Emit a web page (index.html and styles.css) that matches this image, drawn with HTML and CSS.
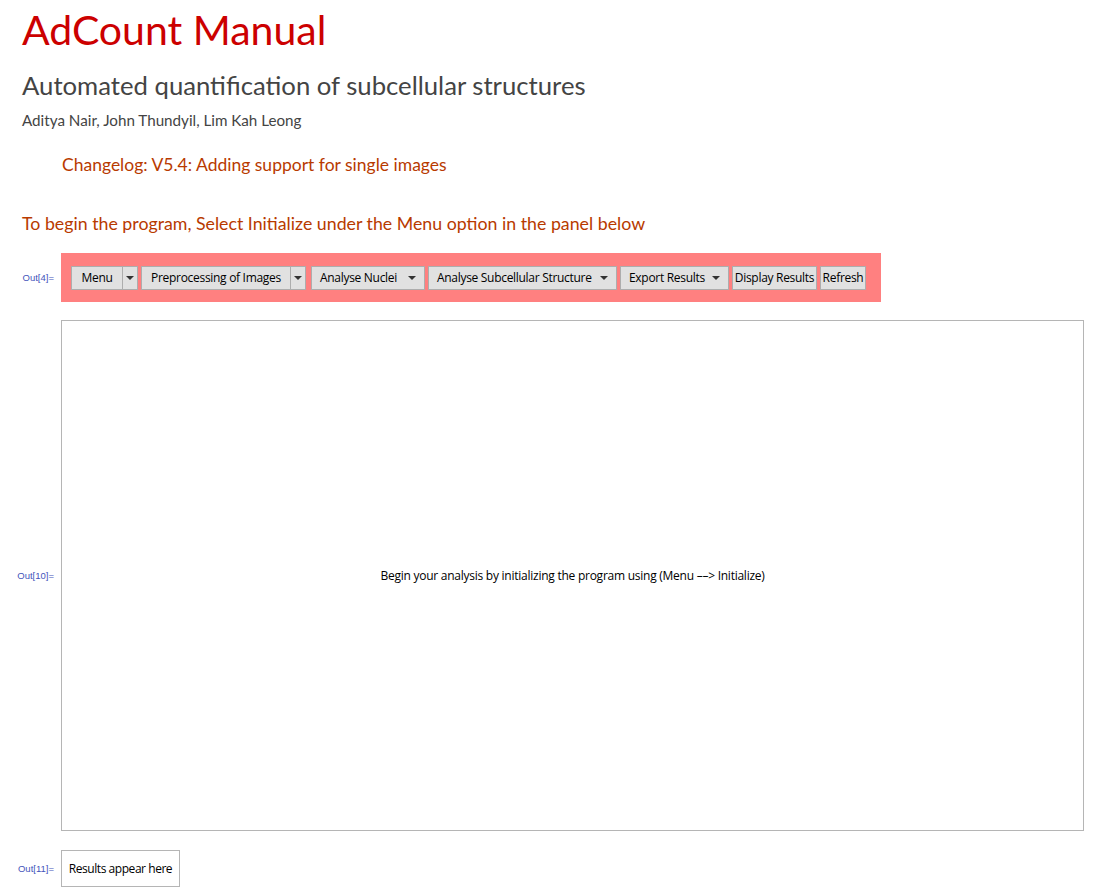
FILE: index.html
```html
<!DOCTYPE html>
<html>
<head>
<meta charset="utf-8">
<link rel="stylesheet" href="styles.css">
</head>
<body>
<div class="page">
  <header class="head">
    <h1 class="title">AdCount Manual</h1>
    <h2 class="subtitle">Automated quantification of subcellular structures</h2>
    <p class="authors">Aditya Nair, John Thundyil, Lim Kah Leong</p>
    <p class="changelog">Changelog: V5.4: Adding support for single images</p>
    <p class="instr">To begin the program, Select Initialize under the Menu option in the panel below</p>
  </header>

  <div class="cell cell-bar">
    <span class="out">Out[4]=</span>
    <div class="panel">
      <div class="split"><span class="btn b-menu">Menu</span><span class="arrowbtn"><i class="tri"></i></span></div>
      <div class="split"><span class="btn b-pre">Preprocessing of Images</span><span class="arrowbtn"><i class="tri"></i></span></div>
      <span class="btn dd b-nuc">Analyse Nuclei<i class="tri"></i></span>
      <span class="btn dd b-sub">Analyse Subcellular Structure<i class="tri"></i></span>
      <span class="btn dd b-exp">Export Results<i class="tri"></i></span>
      <span class="btn b-disp">Display Results</span>
      <span class="btn b-ref">Refresh</span>
    </div>
  </div>

  <div class="cell cell-main">
    <span class="out">Out[10]=</span>
    <div class="mainbox">Begin your analysis by initializing the program using (Menu &ndash;&ndash;&gt; Initialize)</div>
  </div>

  <div class="cell cell-res">
    <span class="out">Out[11]=</span>
    <div class="resbox">Results appear here</div>
  </div>
</div>
</body>
</html>
```

FILE: styles.css
```css
* { box-sizing: border-box; }
html, body { margin: 0; padding: 0; background: #fff; }
body { font-family: "Open Sans", "Noto Sans", sans-serif; }

.page { width: 1111px; }

.head { padding-left: 22px; font-family: Lato, "Liberation Sans", sans-serif; }
.title {
  margin: 0; padding-top: 4px;
  font-size: 41px; font-weight: 400; color: #cc0000; line-height: 52px;
}
.subtitle {
  margin: 13px 0 0 0; font-size: 25.7px; font-weight: 400; color: #444;
  line-height: 32px;
}
.authors { margin: 9px 0 0 0; font-size: 15.2px; color: #444; line-height: 20px; }
.changelog {
  margin: 24px 0 0 40px; font-size: 17.5px; color: #b83a00; line-height: 22px;
}
.instr { margin: 36px 0 0 0; font-size: 17.75px; color: #b83a00; line-height: 22px; }

.cell { display: flex; align-items: center; }
.out {
  width: 61px; padding-right: 7px; text-align: right;
  font-family: "Liberation Sans", Arial, sans-serif; font-size: 9.5px; color: #4455bb;
  flex: none;
}
.cell-bar { margin-top: 19px; }
.panel {
  background: #ff8080; height: 49px; width: 820px;
  display: flex; align-items: center; gap: 3px; padding: 0 10px;
}
.btn {
  display: inline-flex; align-items: center; justify-content: center;
  height: 24px; background: #e1e1e1; border: 1px solid #adadad;
  font-size: 12px; color: #000; white-space: nowrap; padding: 0 8px;
  font-family: "Open Sans", "Noto Sans", sans-serif; letter-spacing: -0.3px;
}
.split { display: flex; }
.split .btn { border-right: none; }
.arrowbtn {
  width: 16px; height: 24px; background: #e1e1e1; border: 1px solid #adadad;
  display: inline-flex; align-items: center; justify-content: center;
}
.tri {
  display: inline-block; width: 0; height: 0;
  border-left: 4px solid transparent; border-right: 4px solid transparent;
  border-top: 4px solid #333;
}
.dd { justify-content: space-between; }
.b-menu { width: 51px; }
.b-pre { width: 149px; }
.b-nuc { width: 114px; margin-left: 2px; }
.b-sub { width: 189px; }
.b-exp { width: 109px; }
.b-disp { width: 85px; padding: 0 3px; }
.b-ref { width: 46px; padding: 0 3px; }

.cell-main { margin-top: 18px; }
.mainbox {
  width: 1023px; height: 511px; border: 1px solid #b5b5b5;
  display: flex; align-items: center; justify-content: center;
  font-size: 12px; color: #000; letter-spacing: -0.25px;
}
.cell-res { margin-top: 19px; }
.resbox {
  height: 37px; width: 119px; border: 1px solid #b5b5b5;
  display: flex; align-items: center; justify-content: center;
  font-size: 12px; color: #000; letter-spacing: -0.45px;
}
```
